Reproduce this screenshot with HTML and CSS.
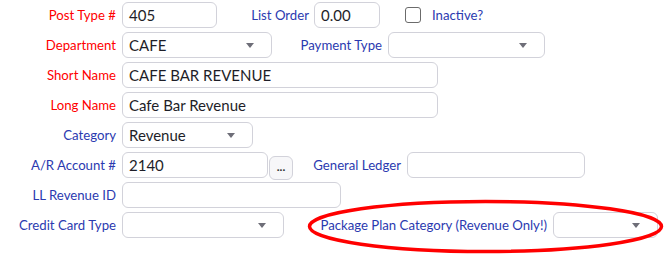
FILE: index.html
```html
<!DOCTYPE html>
<html>
<head>
<meta charset="utf-8">
<link rel="stylesheet" href="styles.css">
</head>
<body>
<div class="form">
  <div class="row">
    <label class="lbl req">Post Type #</label>
    <div class="field w95">405</div>
    <label class="lbl2 w-lo">List Order</label>
    <div class="field w66">0.00</div>
    <span class="check"></span>
    <span class="chk-lbl">Inactive?</span>
  </div>
  <div class="row">
    <label class="lbl req">Department</label>
    <div class="field select w150">CAFE<span class="arrow"></span></div>
    <label class="lbl2 w-pt">Payment Type</label>
    <div class="field select w157"><span class="arrow"></span></div>
  </div>
  <div class="row">
    <label class="lbl req">Short Name</label>
    <div class="field w316">CAFE BAR REVENUE</div>
  </div>
  <div class="row">
    <label class="lbl req">Long Name</label>
    <div class="field w316">Cafe Bar Revenue</div>
  </div>
  <div class="row">
    <label class="lbl">Category</label>
    <div class="field select w131">Revenue<span class="arrow"></span></div>
  </div>
  <div class="row">
    <label class="lbl">A/R Account #</label>
    <div class="field w146">2140</div>
    <div class="btn">...</div>
    <label class="lbl2 w-gl">General Ledger</label>
    <div class="field w178"></div>
  </div>
  <div class="row">
    <label class="lbl">LL Revenue ID</label>
    <div class="field w219"></div>
  </div>
  <div class="row">
    <label class="lbl">Credit Card Type</label>
    <div class="field select w162"><span class="arrow"></span></div>
    <label class="lbl2 w-pp">Package Plan Category (Revenue Only!)</label>
    <div class="field select w105"><span class="arrow"></span></div>
  </div>
  <svg class="circle" width="666" height="255" viewBox="0 0 666 255">
    <ellipse cx="485.5" cy="226.5" rx="176" ry="25" fill="none" stroke="#f00" stroke-width="3.5"/>
  </svg>
</div>
</body>
</html>
```
FILE: styles.css
```css
html, body {
  margin: 0;
  padding: 0;
  background: #fff;
}
body {
  font-family: Lato, "Open Sans", sans-serif;
  width: 666px;
  height: 255px;
  overflow: hidden;
}
.form {
  position: relative;
  padding-top: 2px;
  width: 666px;
  height: 253px;
}
.row {
  display: flex;
  align-items: center;
  height: 26px;
  margin-bottom: 4px;
}
.lbl {
  width: 116px;
  margin-right: 6px;
  text-align: right;
  font-size: 13.2px;
  color: #2b3ab0;
  white-space: nowrap;
  flex: none;
}
.lbl.req { color: #f00; }
.lbl2 {
  text-align: right;
  font-size: 13.2px;
  color: #2b3ab0;
  white-space: nowrap;
  margin-right: 6px;
  flex: none;
}
.w-lo { width: 92px; margin-right: 5px; }
.w-pt { width: 110px; }
.w-gl { width: 108px; }
.w-pp { width: 263px; }
.field {
  position: relative;
  box-sizing: border-box;
  height: 26px;
  border: 1px solid #d2d2da;
  border-radius: 6px;
  padding: 0 6px;
  font-size: 15px;
  line-height: 24px;
  color: #1e1e28;
  background: #fff;
  flex: none;
  white-space: nowrap;
}
.w95 { width: 95px; }
.w66 { width: 66px; }
.w150 { width: 150px; }
.w157 { width: 157px; }
.w316 { width: 316px; }
.w131 { width: 131px; }
.w146 { width: 146px; }
.w178 { width: 178px; }
.w219 { width: 219px; }
.w162 { width: 162px; }
.w105 { width: 105px; }
.arrow {
  position: absolute;
  right: 17px;
  top: 10px;
  width: 0;
  height: 0;
  border-left: 4px solid transparent;
  border-right: 4px solid transparent;
  border-top: 5px solid #6e6e78;
}
.check {
  box-sizing: border-box;
  width: 16px;
  height: 16px;
  border: 1.5px solid #6b6b6b;
  border-radius: 3px;
  margin-left: 25px;
  margin-right: 11px;
  flex: none;
}
.chk-lbl {
  font-size: 13.2px;
  color: #2b3ab0;
}
.btn {
  box-sizing: border-box;
  width: 24px;
  height: 24px;
  margin-left: 1px;
  margin-top: 6px;
  border: 1px solid #d2d2da;
  border-radius: 6px;
  background: #f7f7f9;
  font-size: 12px;
  font-weight: bold;
  color: #333;
  text-align: center;
  line-height: 20px;
  flex: none;
}
.circle {
  position: absolute;
  left: 0;
  top: 0;
  pointer-events: none;
}
```
